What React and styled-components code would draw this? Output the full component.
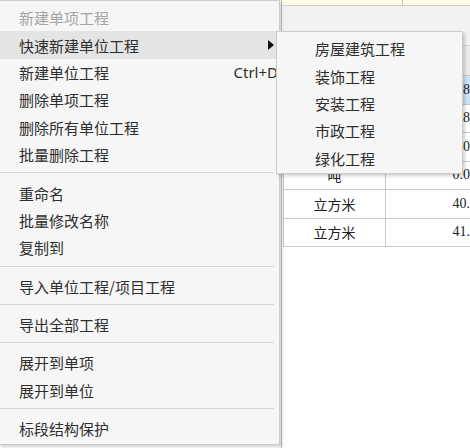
import React from "react";
import styled, { createGlobalStyle } from "styled-components";

const GlobalStyle = createGlobalStyle`
  html, body {
    margin: 0;
    padding: 0;
    background: #ffffff;
  }
  body {
    font-family: "Noto Sans CJK SC", "Noto Sans", sans-serif;
  }
`;

const Screen = styled.div`
  position: relative;
  width: 470px;
  height: 448px;
  overflow: hidden;
  background: #ffffff;
`;

const Backdrop = styled.div`
  display: flex;
  height: 100%;
`;

const SideGap = styled.div`
  width: 281px;
  flex-shrink: 0;
`;

const Panel = styled.div`
  display: flex;
  flex-direction: column;
  width: 260px;
  flex-shrink: 0;
  border-left: 1px solid #c4c4c4;
  padding-left: 1px;
`;

const InfoStrip = styled.div`
  display: grid;
  grid-template-columns: 120px 1fr;
  height: 5px;
  background: #fffbe6;
  border-bottom: 1px solid #cfcfcf;

  & > div:first-child {
    border-right: 1px solid #c8c8c8;
  }
`;

const Toolbar = styled.div`
  height: 39px;
  background: #f2f2f2;
  border-bottom: 1px solid #d2d2d2;
`;

const Grid = styled.div`
  display: flex;
  flex-direction: column;
  border-left: 1px solid #c6c6c6;
`;

const Row = styled.div`
  display: grid;
  grid-template-columns: 102px 112px;
  box-sizing: border-box;
  height: ${(p) => (p.$header ? "30px" : "28.5px")};
  background: ${(p) => (p.$header ? "#ebebeb" : p.$selected ? "#cce4f7" : "#ffffff")};
  border-bottom: 1px solid #c8c8c8;
`;

const Cell = styled.div`
  display: flex;
  align-items: center;
  justify-content: ${(p) => (p.$num ? "flex-end" : "center")};
  padding-right: ${(p) => (p.$num ? "6px" : "0")};
  border-right: 1px solid #c8c8c8;
  font-family: ${(p) =>
    p.$num ? '"Liberation Serif", serif' : '"Noto Sans CJK SC", sans-serif'};
  font-size: 14px;
  color: #222222;
  white-space: nowrap;
`;

const Menu = styled.div`
  position: absolute;
  top: 0;
  left: -1px;
  width: 281px;
  box-sizing: border-box;
  padding: 3px 0 2px;
  background: #f6f6f6;
  border: 1px solid #cccccc;
  box-shadow: 2px 2px 3px rgba(0, 0, 0, 0.18);
`;

const SubMenu = styled(Menu)`
  top: 31px;
  left: 276px;
  width: 187px;
  padding: 3px 0 1px;
`;

const Item = styled.div`
  display: flex;
  align-items: center;
  height: 27.4px;
  padding: 0 4px 0 ${(p) => (p.$indent ? "38px" : "19px")};
  font-size: 15px;
  color: ${(p) => (p.$disabled ? "#a3a3a3" : "#2e2e2e")};
  background: ${(p) => (p.$active ? "#e4e4e4" : "transparent")};
  white-space: nowrap;
`;

const Label = styled.span`
  flex: 1;
`;

const Shortcut = styled.span`
  font-family: "Noto Sans", sans-serif;
  font-size: 15px;
  color: #2e2e2e;
  margin-right: -3px;
`;

const Arrow = styled.span`
  width: 0;
  height: 0;
  margin-right: 1px;
  border-top: 5px solid transparent;
  border-bottom: 5px solid transparent;
  border-left: 6px solid #111111;
`;

const Separator = styled.div`
  height: 1px;
  margin: 4px 5px 6px 0;
  background: #d4d4d4;
`;

const groups = [
  [
    { label: "新建单项工程", disabled: true },
    { label: "快速新建单位工程", active: true, submenu: true },
    { label: "新建单位工程", shortcut: "Ctrl+D" },
    { label: "删除单项工程" },
    { label: "删除所有单位工程" },
    { label: "批量删除工程" },
  ],
  [{ label: "重命名" }, { label: "批量修改名称" }, { label: "复制到" }],
  [{ label: "导入单位工程/项目工程" }],
  [{ label: "导出全部工程" }],
  [{ label: "展开到单项" }, { label: "展开到单位" }],
  [{ label: "标段结构保护" }],
];

const subItems = ["房屋建筑工程", "装饰工程", "安装工程", "市政工程", "绿化工程"];

// units of the first rows sit under the submenu, so they stay empty
const rows = [
  { unit: "", value: "0.8642", selected: true },
  { unit: "", value: "0.8150" },
  { unit: "", value: "0.0265" },
  { unit: "吨", value: "0.0480" },
  { unit: "立方米", value: "40.500" },
  { unit: "立方米", value: "41.250" },
];

export default function App() {
  return (
    <Screen>
      <GlobalStyle />
      <Backdrop>
        <SideGap />
        <Panel>
          <InfoStrip>
            <div />
            <div />
          </InfoStrip>
          <Toolbar />
          <Grid>
            <Row $header>
              <Cell />
              <Cell />
            </Row>
            {rows.map((r, i) => (
              <Row key={i} $selected={r.selected}>
                <Cell>{r.unit}</Cell>
                <Cell $num>{r.value}</Cell>
              </Row>
            ))}
          </Grid>
        </Panel>
      </Backdrop>

      <Menu>
        {groups.map((group, gi) => (
          <React.Fragment key={gi}>
            {gi > 0 && <Separator />}
            {group.map((it) => (
              <Item key={it.label} $disabled={it.disabled} $active={it.active}>
                <Label>{it.label}</Label>
                {it.shortcut && <Shortcut>{it.shortcut}</Shortcut>}
                {it.submenu && <Arrow />}
              </Item>
            ))}
          </React.Fragment>
        ))}
      </Menu>

      <SubMenu>
        {subItems.map((s) => (
          <Item key={s} $indent>
            {s}
          </Item>
        ))}
      </SubMenu>
    </Screen>
  );
}
